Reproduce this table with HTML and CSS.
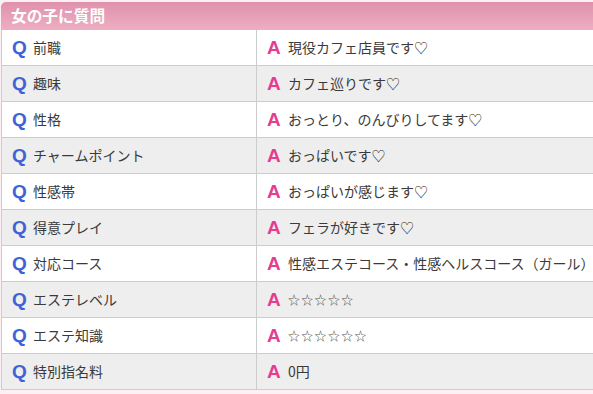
FILE: index.html
```html
<!DOCTYPE html>
<html lang="ja">
<head>
<meta charset="utf-8">
<link rel="stylesheet" href="styles.css">
</head>
<body>
<div class="box">
  <h2 class="ttl">女の子に質問</h2>
  <table class="qa">
    <tr><td class="q"><span class="mq">Q</span>前職</td><td class="a"><span class="ma">A</span>現役カフェ店員です♡</td></tr>
    <tr><td class="q"><span class="mq">Q</span>趣味</td><td class="a"><span class="ma">A</span>カフェ巡りです♡</td></tr>
    <tr><td class="q"><span class="mq">Q</span>性格</td><td class="a"><span class="ma">A</span>おっとり、のんびりしてます♡</td></tr>
    <tr><td class="q"><span class="mq">Q</span>チャームポイント</td><td class="a"><span class="ma">A</span>おっぱいです♡</td></tr>
    <tr><td class="q"><span class="mq">Q</span>性感帯</td><td class="a"><span class="ma">A</span>おっぱいが感じます♡</td></tr>
    <tr><td class="q"><span class="mq">Q</span>得意プレイ</td><td class="a"><span class="ma">A</span>フェラが好きです♡</td></tr>
    <tr><td class="q"><span class="mq">Q</span>対応コース</td><td class="a"><span class="ma">A</span>性感エステコース・性感ヘルスコース（ガール）</td></tr>
    <tr><td class="q"><span class="mq">Q</span>エステレベル</td><td class="a"><span class="ma">A</span><span class="stars">☆☆☆☆☆</span></td></tr>
    <tr><td class="q"><span class="mq">Q</span>エステ知識</td><td class="a"><span class="ma">A</span><span class="stars">☆☆☆☆☆☆</span></td></tr>
    <tr><td class="q"><span class="mq">Q</span>特別指名料</td><td class="a"><span class="ma">A</span>0円</td></tr>
  </table>
</div>
</body>
</html>
```
FILE: styles.css
```css
html, body {
  margin: 0;
  padding: 0;
  overflow: hidden;
  background: #fbf1f4;
}
body {
  font-family: "Noto Sans CJK JP", "Noto Sans", sans-serif;
  color: #3a3a3a;
}
.box {
  width: 680px;
  padding: 2px 0 0 1px;
}
.ttl {
  margin: 0;
  height: 28px;
  line-height: 28px;
  padding-left: 10px;
  font-size: 15.7px;
  font-weight: bold;
  color: #fff;
  background: linear-gradient(#df91ab, #eeaec3);
  border-radius: 5px 5px 0 0;
}
.qa {
  width: 100%;
  border-collapse: collapse;
  border-left: 1px solid #ccc;
}
.qa tr:nth-child(even) td {
  background: #eeeeee;
}
.qa td {
  height: 35px;
  padding: 0 0 0 10px;
  font-size: 14px;
  background: #fff;
  border-bottom: 1px solid #cccccc;
  white-space: nowrap;
  vertical-align: middle;
}
.qa td.q {
  width: 244px;
  border-right: 1px solid #cccccc;
}
.mq, .ma {
  display: inline-block;
  width: 21px;
  font-family: "Liberation Sans", Arial, sans-serif;
  font-weight: bold;
  font-size: 19px;
  vertical-align: -1px;
}
.mq { color: #4062d8; }
.ma { color: #e63d8f; }
.stars {
  font-size: 12px;
  letter-spacing: 1.3px;
  color: #555;
}
```
